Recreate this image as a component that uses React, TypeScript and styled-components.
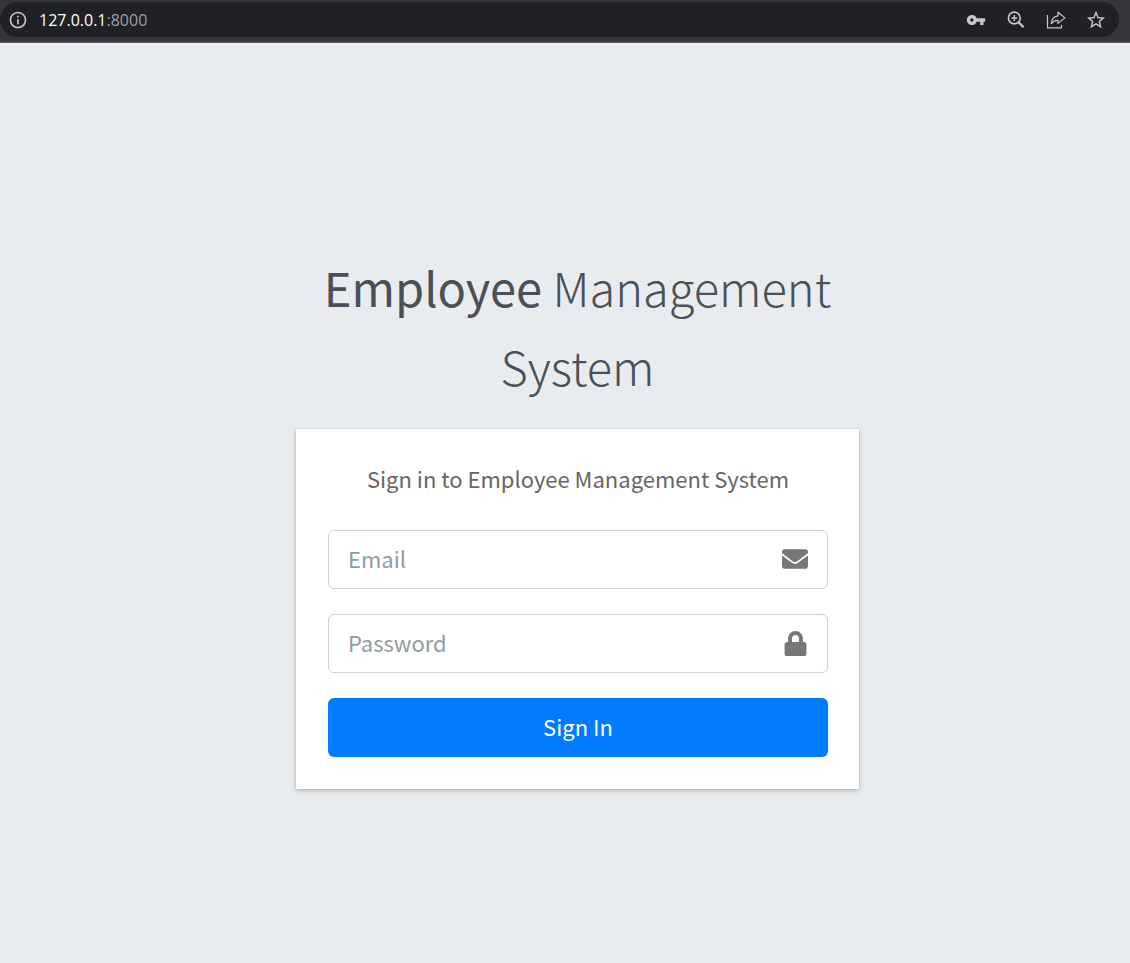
import React from 'react';
import styled, { createGlobalStyle } from 'styled-components';
import { FaEnvelope, FaLock } from 'react-icons/fa';
import { MdInfoOutline, MdVpnKey, MdStarBorder } from 'react-icons/md';

const GlobalStyle = createGlobalStyle`
  * { box-sizing: border-box; }
  body {
    margin: 0;
    background: #e9ecef;
    color: #212529;
    font-family: 'Source Sans Pro', 'Noto Sans CJK SC', sans-serif;
  }
`;

const Page = styled.div`
  display: flex;
  flex-direction: column;
  min-height: 100vh;
`;

const Toolbar = styled.header`
  padding: 2px 11px 5px 0;
  background: #35363a;
  border-bottom: 1px solid #5c5d61;
`;

const AddressBar = styled.div`
  display: flex;
  align-items: center;
  height: 35px;
  padding: 0 13px 0 8px;
  border-radius: 18px;
  background: #202124;
`;

const Address = styled.div`
  flex: 1;
  margin-left: 11px;
  color: #ffffff;
  font: 16px/24px 'Segoe UI', 'Open Sans', sans-serif;
`;

const Port = styled.span`
  color: #9aa0a6;
`;

const BarActions = styled.div`
  display: flex;
  gap: 20px;
`;

const BarButton = styled.button`
  display: flex;
  align-items: center;
  justify-content: center;
  width: 20px;
  height: 20px;
  padding: 0;
  border: 0;
  background: none;
  color: #c7c7c7;

  svg {
    flex-shrink: 0;
  }
`;

const Main = styled.main`
  flex: 1;
  display: flex;
  flex-direction: column;
  align-items: center;
  justify-content: center;
  padding: 29px 0 0 25px;
`;

const LoginBox = styled.div`
  width: 100%;
  max-width: 563px;
`;

const Title = styled.h1`
  margin: 0 0 24px;
  color: #495057;
  font-size: 47px;
  font-weight: 200;
  line-height: 79px;
  text-align: center;
`;

const Strong = styled.b`
  font-weight: 400;
`;

const Card = styled.form`
  padding: 32px 31px 32px 32px;
  background: #ffffff;
  box-shadow: 0 0 2px rgba(0, 0, 0, 0.13), 0 2px 5px rgba(0, 0, 0, 0.2);
`;

const Message = styled.p`
  margin: 0 0 35px;
  color: #666666;
  font-size: 22px;
  line-height: 34px;
  text-align: center;
`;

const Field = styled.label`
  display: flex;
  align-items: center;
  height: 59px;
  margin-bottom: 25px;
  padding: 0 19px;
  border: 1px solid #ced4da;
  border-radius: 6px;
  color: #777777;
`;

const Input = styled.input`
  flex: 1;
  min-width: 0;
  padding: 0 0 2px;
  border: 0;
  outline: 0;
  background: none;
  color: #495057;
  font-family: inherit;
  font-size: 22px;
  line-height: 38px;

  &::placeholder {
    color: #939ba2;
    opacity: 1;
  }
`;

const SubmitButton = styled.button`
  display: block;
  width: 100%;
  height: 59px;
  padding: 0 0 2px;
  border: 0;
  border-radius: 6px;
  background: #007bff;
  color: #ffffff;
  font-family: inherit;
  font-size: 22px;
  line-height: 38px;
`;

const ZoomIcon = () => (
  <svg width="20" height="20" viewBox="0 0 20 20" fill="none" stroke="currentColor" aria-hidden="true">
    <circle cx="8.3" cy="8" r="5.9" strokeWidth="1.6" />
    <path d="M8.3 5V11M5.3 8H11.3" strokeWidth="1.5" />
    <path d="M12.4 12.1L17.6 17.3" strokeWidth="2.2" />
  </svg>
);

const ShareIcon = () => (
  <svg width="20" height="20" viewBox="0 0 20 20" fill="none" stroke="currentColor" strokeWidth="1.2" aria-hidden="true">
    <path d="M1.5 5V17.8H15.5V15" />
    <path d="M5.2 13.6C5.7 9 8.2 6.2 12 5.8V2.2L18.9 7.9L12 13.4V10.3C9 10.2 7 11.3 5.2 13.6Z" strokeLinejoin="round" />
  </svg>
);

export default function App() {
  return (
    <Page>
      <GlobalStyle />
      <Toolbar>
        <AddressBar>
          <BarButton type="button" aria-label="Site information"><MdInfoOutline size={20} /></BarButton>
          <Address>127.0.0.1<Port>:8000</Port></Address>
          <BarActions>
            <BarButton type="button" aria-label="Passwords"><MdVpnKey size={20} /></BarButton>
            <BarButton type="button" aria-label="Zoom"><ZoomIcon /></BarButton>
            <BarButton type="button" aria-label="Share"><ShareIcon /></BarButton>
            <BarButton type="button" aria-label="Bookmark"><MdStarBorder size={22} /></BarButton>
          </BarActions>
        </AddressBar>
      </Toolbar>
      <Main>
        <LoginBox>
          <Title><Strong>Employee</Strong> Management System</Title>
          <Card onSubmit={(event) => event.preventDefault()}>
            <Message>Sign in to Employee Management System</Message>
            <Field>
              <Input type="email" placeholder="Email" aria-label="Email" />
              <FaEnvelope size={26} />
            </Field>
            <Field>
              <Input type="password" placeholder="Password" aria-label="Password" />
              <FaLock size={25} />
            </Field>
            <SubmitButton type="submit">Sign In</SubmitButton>
          </Card>
        </LoginBox>
      </Main>
    </Page>
  );
}
